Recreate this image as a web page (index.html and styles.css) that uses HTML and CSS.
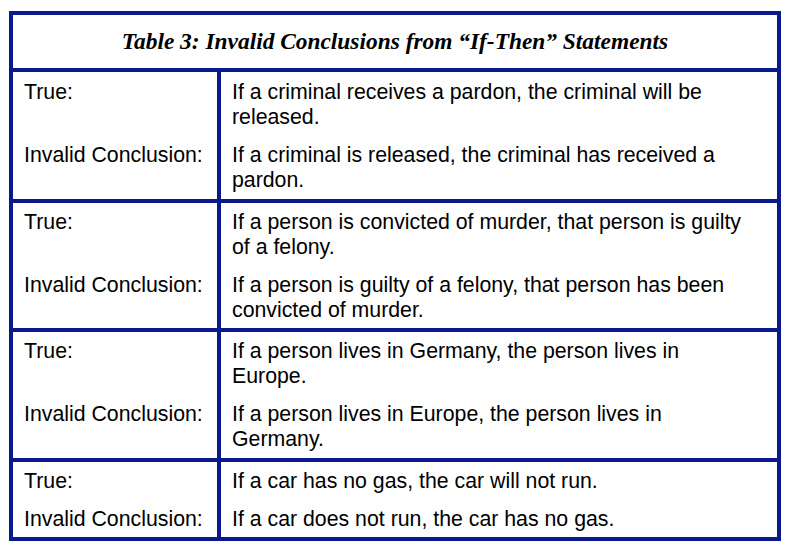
FILE: index.html
```html
<!DOCTYPE html>
<html lang="en">
<head>
<meta charset="utf-8">
<title>Table 3</title>
<link rel="stylesheet" href="styles.css">
</head>
<body>
<div class="table">
  <div class="caption">Table 3: Invalid Conclusions from “If-Then” Statements</div>
  <div class="group group-tall">
    <div class="label first">True:</div>
    <div class="stmt first">If a criminal receives a pardon, the criminal will be released.</div>
    <div class="label second">Invalid Conclusion:</div>
    <div class="stmt second">If a criminal is released, the criminal has received a pardon.</div>
  </div>
  <div class="group group-short">
    <div class="label first">True:</div>
    <div class="stmt first">If a person is convicted of murder, that person is guilty of a felony.</div>
    <div class="label second">Invalid Conclusion:</div>
    <div class="stmt second">If a person is guilty of a felony, that person has been convicted of murder.</div>
  </div>
  <div class="group">
    <div class="label first">True:</div>
    <div class="stmt first">If a person lives in Germany, the person lives in Europe.</div>
    <div class="label second">Invalid Conclusion:</div>
    <div class="stmt second">If a person lives in Europe, the person lives in Germany.</div>
  </div>
  <div class="group group-short">
    <div class="label first">True:</div>
    <div class="stmt first">If a car has no gas, the car will not run.</div>
    <div class="label second">Invalid Conclusion:</div>
    <div class="stmt second">If a car does not run, the car has no gas.</div>
  </div>
</div>
</body>
</html>
```

FILE: styles.css
```css
html, body {
  margin: 0;
  padding: 0;
  background: #ffffff;
}

body {
  padding: 11px 0 0 9px;
}

.table {
  width: 772px;
  box-sizing: border-box;
  border: 4px solid #0a1a8c;
  background: #ffffff;
}

.caption {
  height: 53px;
  display: flex;
  align-items: center;
  justify-content: center;
  font-family: "Liberation Serif", "Times New Roman", serif;
  font-weight: bold;
  font-style: italic;
  font-size: 23.4px;
  color: #000;
  border-bottom: 4px solid #0a1a8c;
}

.group {
  display: grid;
  grid-template-columns: 208px 1fr;
  border-bottom: 4px solid #0a1a8c;
  font-family: "Liberation Sans", Arial, sans-serif;
  font-size: 21.3px;
  line-height: 25px;
  color: #000;
}

.group:last-child {
  border-bottom: none;
}

.label {
  border-right: 4px solid #0a1a8c;
  padding-left: 11px;
  white-space: nowrap;
}

.stmt {
  padding-left: 11px;
  padding-right: 25px;
}

.first {
  padding-top: 7px;
}

.second {
  padding-top: 13px;
  padding-bottom: 6px;
}

.group-tall .first {
  padding-top: 8px;
}

.group-short .second {
  padding-bottom: 5px;
}
```
